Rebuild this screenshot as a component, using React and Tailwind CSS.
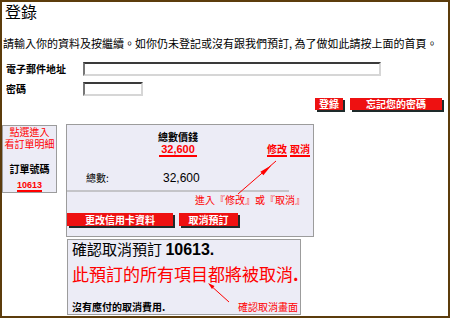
import React from 'react';

const cjk = "font-['Noto_Sans_CJK_TC','Noto_Sans_CJK_SC',sans-serif]";
const arial = "font-['Liberation_Sans',Arial,sans-serif]";

function RedButton({ label, className = '' }) {
  return (
    <div
      className={`flex items-center justify-center bg-[#ee1111] text-white font-bold text-[10px] leading-[12px] shadow-[2px_2px_0_#1e2a2a] ${className}`}
    >
      {label}
    </div>
  );
}

export default function App() {
  return (
    <div className={`relative w-[450px] h-[318px] overflow-hidden border-2 border-[#5c3c0c] bg-white text-black ${cjk}`}>
      <div className="pl-[3px] text-[16px] leading-[18px]">登錄</div>

      <div className="mt-[16px] pl-[1px] text-[11px] leading-[14px] whitespace-nowrap">
        請輸入你的資料及按繼續。如你仍未登記或沒有跟我們預訂, 為了做如此請按上面的首頁。
      </div>

      <div className="mt-[12px] flex items-center h-[14px]">
        <div className="w-[81px] pl-[4px] text-[10px] leading-[12px] font-bold">電子郵件地址</div>
        <div className="w-[298px] h-[14px] border-2 border-t-[#3a3a3a] border-l-[#777] border-r-[#d6d6d6] border-b-[#d6d6d6] bg-white" />
      </div>

      <div className="mt-[6px] flex items-center h-[14px]">
        <div className="w-[81px] pl-[4px] text-[10px] leading-[12px] font-bold">密碼</div>
        <div className="w-[60px] h-[14px] border-2 border-t-[#3a3a3a] border-l-[#777] border-r-[#d6d6d6] border-b-[#d6d6d6] bg-white" />
      </div>

      <div className="mt-[2px] flex justify-end gap-[7px] pr-[6px]">
        <RedButton label="登錄" className="w-[28px] h-[12px]" />
        <RedButton label="忘記您的密碼" className="w-[92px] h-[12px]" />
      </div>

      <div className="mt-[14px] flex items-start">
        {/* order number side box */}
        <div className="mt-[1px] w-[55px] h-[68px] border border-[#9c9c9c] bg-[#ececf6] flex flex-col items-center">
          <div className="text-[10px] leading-[12px] text-[#ff0000] text-center whitespace-pre-line">{'點選進入\n看訂單明細'}</div>
          <div className="mt-[13px] text-[10px] leading-[12px] font-bold">訂單號碼</div>
          <div className={`mt-[5px] text-[9px] leading-[10px] font-bold text-[#ff0000] border-b-2 border-[#ff0000] ${arial}`}>10613</div>
        </div>

        <div className="ml-[9px] flex flex-col">
          {/* totals box */}
          <div className="w-[248px] h-[113px] border border-[#9c9c9c] bg-[#ececf6] flex flex-col">
            <div className="flex items-end">
              <div className="ml-[91px] w-[40px] flex flex-col items-center">
                <div className="mt-[6px] text-[10px] leading-[12px] font-bold whitespace-nowrap">總數價錢</div>
                <div className={`px-[2px] text-[11px] leading-[12px] font-bold text-[#ff0000] border-b-2 border-[#ff0000] ${arial}`}>32,600</div>
              </div>
              <div className="ml-auto mr-[3px] flex gap-[3px]">
                <span className="text-[10px] leading-[12px] font-bold text-[#ff0000] border-b-2 border-[#ff0000]">修改</span>
                <span className="text-[10px] leading-[12px] font-bold text-[#ff0000] border-b-2 border-[#ff0000]">取消</span>
              </div>
            </div>

            <div className="mt-[15px] flex items-center">
              <div className="w-[96px] pl-[19px] text-[10px] leading-[12px]">總數:</div>
              <div className={`text-[12px] leading-[12px] ${arial}`}>32,600</div>
            </div>

            <div className="mt-[6px] w-[222px] h-[2px] bg-[#c4c4c8]" />

            <div className="mt-[2px] pr-[8px] text-right text-[10px] leading-[12px] text-[#ff0000] whitespace-nowrap">
              進入『修改』或『取消』
            </div>

            <div className="mt-[7px] flex gap-[6px]">
              <RedButton label="更改信用卡資料" className="w-[106px] h-[13px]" />
              <RedButton label="取消預訂" className="w-[59px] h-[13px]" />
            </div>
          </div>

          {/* cancellation box */}
          <div className="mt-[2px] ml-[1px] w-[234px] h-[76px] border border-[#9c9c9c] bg-[#ececf6] pl-[4px] pr-[2px] flex flex-col">
            <div className="text-[15px] leading-[17px] whitespace-nowrap">
              確認取消預訂 <span className={`font-bold text-[16px] ${arial}`}>10613.</span>
            </div>
            <div className="mt-[7px] text-[17px] leading-[18px] text-[#ff0000] whitespace-nowrap">
              此預訂的所有項目都將被取消<span className="font-bold">.</span>
            </div>
            <div className="mt-[18px] flex justify-between items-center">
              <span className="text-[10px] leading-[12px] font-bold">沒有應付的取消費用.</span>
              <span className="text-[10px] leading-[12px] text-[#ff0000]">確認取消畫面</span>
            </div>
          </div>
        </div>
      </div>

      {/* arrows drawn over the content */}
      <svg className="absolute left-0 top-0 pointer-events-none" width="446" height="314" viewBox="2 2 446 314">
        <line x1="238" y1="194" x2="276" y2="161" stroke="#ff0000" strokeWidth="1" />
        <polygon points="271.5,165.2 263.4,175.2 260.4,171.8" fill="#ff0000" />
        <line x1="229" y1="302" x2="209" y2="284" stroke="#ff0000" strokeWidth="1" />
        <polygon points="208,283 214.5,286 212,289" fill="#ff0000" />
      </svg>
    </div>
  );
}
